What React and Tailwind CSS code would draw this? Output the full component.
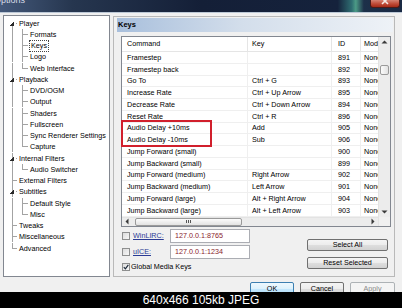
import React from "react";

const treeItems = [
  { label: "Player", level: 0, parent: true, first: true },
  { label: "Formats", level: 1 },
  { label: "Keys", level: 1, selected: true },
  { label: "Logo", level: 1 },
  { label: "Web Interface", level: 1, lastChild: true },
  { label: "Playback", level: 0, parent: true },
  { label: "DVD/OGM", level: 1 },
  { label: "Output", level: 1 },
  { label: "Shaders", level: 1 },
  { label: "Fullscreen", level: 1 },
  { label: "Sync Renderer Settings", level: 1 },
  { label: "Capture", level: 1, lastChild: true },
  { label: "Internal Filters", level: 0, parent: true },
  { label: "Audio Switcher", level: 1, lastChild: true },
  { label: "External Filters", level: 0 },
  { label: "Subtitles", level: 0, parent: true },
  { label: "Default Style", level: 1 },
  { label: "Misc", level: 1, lastChild: true },
  { label: "Tweaks", level: 0 },
  { label: "Miscellaneous", level: 0 },
  { label: "Advanced", level: 0, last: true },
];

const keyRows = [
  ["Framestep", "", "891"],
  ["Framestep back", "", "892"],
  ["Go To", "Ctrl + G", "893"],
  ["Increase Rate", "Ctrl + Up Arrow", "895"],
  ["Decrease Rate", "Ctrl + Down Arrow", "894"],
  ["Reset Rate", "Ctrl + R", "896"],
  ["Audio Delay +10ms", "Add", "905"],
  ["Audio Delay -10ms", "Sub", "906"],
  ["Jump Forward (small)", "", "900"],
  ["Jump Backward (small)", "", "899"],
  ["Jump Forward (medium)", "Right Arrow", "902"],
  ["Jump Backward (medium)", "Left Arrow", "901"],
  ["Jump Forward (large)", "Alt + Right Arrow", "904"],
  ["Jump Backward (large)", "Alt + Left Arrow", "903"],
];

const LINE = "#a3a3a3";

function TreeGuide({ item }) {
  const h = 11.25;
  const m = 5.5;
  if (item.level === 0) {
    return (
      <svg width="14" height={h} className="shrink-0" shapeRendering="crispEdges">
        {!item.first && <line x1="8.5" y1="0" x2="8.5" y2={m} stroke={LINE} />}
        {!item.last && <line x1="8.5" y1={m} x2="8.5" y2={h} stroke={LINE} />}
        {item.parent ? (
          <>
            <polygon points="10,3 10,7.5 5.5,7.5" fill="#2a2a2a" />
            <line x1="11.5" y1={m} x2="13" y2={m} stroke={LINE} />
          </>
        ) : (
          <line x1="8.5" y1={m} x2="13" y2={m} stroke={LINE} />
        )}
      </svg>
    );
  }
  return (
    <svg width="25" height={h} className="shrink-0" shapeRendering="crispEdges">
      <line x1="8.5" y1="0" x2="8.5" y2={h} stroke={LINE} />
      <line x1="18.5" y1="0" x2="18.5" y2={item.lastChild ? m : h} stroke={LINE} />
      <line x1="18.5" y1={m} x2="24" y2={m} stroke={LINE} />
    </svg>
  );
}

function Tree() {
  return (
    <div className="w-[107px] h-[262px] shrink-0 border border-[#828790] bg-white pt-[1.5px]">
      {treeItems.map((item) => (
        <div key={item.label} className="flex items-center h-[11.25px]">
          <TreeGuide item={item} />
          <span
            className={
              item.selected
                ? "px-[1px] py-[1.5px] border border-dotted border-[#444] whitespace-nowrap"
                : "ml-[1px] whitespace-nowrap"
            }
          >
            {item.label}
          </span>
        </div>
      ))}
    </div>
  );
}

function Arrow({ dir }) {
  const pts = {
    up: "0.5,3.5 3.5,0.5 6.5,3.5",
    down: "0.5,0.5 3.5,3.5 6.5,0.5",
    left: "3.5,0.5 0.5,3.5 3.5,6.5",
    right: "0.5,0.5 3.5,3.5 0.5,6.5",
  }[dir];
  const vert = dir === "up" || dir === "down";
  return (
    <svg width={vert ? 7 : 4} height={vert ? 4 : 7}>
      <polygon points={pts} fill="#3a3a3a" />
    </svg>
  );
}

function Checkbox({ checked }) {
  return (
    <div className="w-[8px] h-[8px] shrink-0 border border-[#8e8f8f] bg-[linear-gradient(135deg,#dcdcdc,#f7f7f7)] flex items-center justify-center">
      {checked && (
        <svg width="6" height="6" viewBox="0 0 6 6">
          <path d="M0.8 3.2 L2.4 4.8 L5.3 0.9" stroke="#1d2a3a" strokeWidth="1.2" fill="none" />
        </svg>
      )}
    </div>
  );
}

function Button({ children, className }) {
  return (
    <div
      className={
        "flex items-center justify-center rounded-[2px] border border-[#707070] bg-[linear-gradient(#f4f4f4,#ececec_50%,#dedede_50%,#d2d2d2)] " +
        className
      }
    >
      {children}
    </div>
  );
}

function KeysTable() {
  return (
    <div className="relative ml-[7px] mt-[4px] w-[270px] h-[191px] shrink-0 border border-[#828790] bg-white flex">
      <div className="w-[256px] flex flex-col overflow-hidden">
        <div className="h-[15px] shrink-0 flex border-b border-[#e5e5e5]">
          <div className="w-[126px] shrink-0 pl-[5px] flex items-center border-r border-[#e5e5e5]">Command</div>
          <div className="w-[84px] shrink-0 pl-[4px] flex items-center border-r border-[#e5e5e5]">Key</div>
          <div className="w-[29px] shrink-0 pl-[6px] flex items-center border-r border-[#e5e5e5]">ID</div>
          <div className="w-[17px] shrink-0 pl-[3px] flex items-center whitespace-nowrap overflow-hidden">Modifier</div>
        </div>
        {keyRows.map(([cmd, key, id]) => (
          <div key={cmd} className="h-[11.75px] shrink-0 flex border-b border-[#efefef]">
            <div className="w-[126px] shrink-0 pl-[5px] flex items-center border-r border-[#efefef] whitespace-nowrap">{cmd}</div>
            <div className="w-[84px] shrink-0 pl-[4px] flex items-center border-r border-[#efefef] whitespace-nowrap">{key}</div>
            <div className="w-[29px] shrink-0 pl-[6px] flex items-center border-r border-[#efefef]">{id}</div>
            <div className="w-[17px] shrink-0 pl-[3px] flex items-center whitespace-nowrap overflow-hidden">None</div>
          </div>
        ))}
        <div className="flex-1 flex bg-[#ececec] border-t border-[#e3e3e3]">
          <div className="w-[10px] flex items-center justify-center">
            <Arrow dir="left" />
          </div>
          <div className="w-[3px]" />
          <div className="w-[107px] rounded-[2px] border border-[#9a9a9a] bg-[linear-gradient(#fbfbfb,#e2e2e2)] flex items-center justify-center gap-[1px]">
            <div className="w-[1px] h-[3px] bg-[#555]" />
            <div className="w-[1px] h-[3px] bg-[#555]" />
            <div className="w-[1px] h-[3px] bg-[#555]" />
          </div>
          <div className="flex-1" />
          <div className="w-[10px] flex items-center justify-center">
            <Arrow dir="right" />
          </div>
        </div>
      </div>
      <div className="w-[12px] flex flex-col bg-[#ececec] border-l border-[#e3e3e3]">
        <div className="h-[10px] flex items-center justify-center">
          <Arrow dir="up" />
        </div>
        <div className="h-[18px]" />
        <div className="h-[10px] mx-[1px] rounded-[2px] border border-[#9a9a9a] bg-[linear-gradient(to_right,#fbfbfb,#e2e2e2)]" />
        <div className="flex-1" />
        <div className="h-[10px] flex items-center justify-center">
          <Arrow dir="down" />
        </div>
        <div className="h-[9px] bg-[#f0f0f0]" />
      </div>
      <div className="absolute left-[-1px] top-[83px] w-[91px] h-[27px] border-2 border-[#d11f2c]" />
    </div>
  );
}

function KeysPage() {
  return (
    <div className="w-[282px] h-[261px] mt-[1px] shrink-0 border border-[#b9b9b9] flex flex-col">
      <div className="ml-[3px] mt-[1px] w-[276px] h-[14px] shrink-0 pl-[1px] flex items-center font-bold text-[7.5px] bg-[linear-gradient(to_right,#a8bfdc,#d3deeb_45%,#eef2f7)]">
        Keys
      </div>
      <KeysTable />
      <div className="flex justify-between pl-[8px] pr-[6px]">
        <div className="flex flex-col pt-[2px]">
          <div className="h-[14px] flex items-center">
            <div className="w-[48px] flex items-center gap-[3px]">
              <Checkbox />
              <span className="text-[#2a3a94] underline">WinLIRC:</span>
            </div>
            <div className="w-[80px] h-[14px] border border-[#abadb3] bg-white pl-[4px] flex items-center text-[#8a1e2c]">
              127.0.0.1:8765
            </div>
          </div>
          <div className="h-[14px] mt-[2px] flex items-center">
            <div className="w-[48px] flex items-center gap-[3px]">
              <Checkbox />
              <span className="text-[#2a3a94] underline">uICE:</span>
            </div>
            <div className="w-[80px] h-[14px] border border-[#abadb3] bg-white pl-[4px] flex items-center text-[#8a1e2c]">
              127.0.0.1:1234
            </div>
          </div>
          <div className="h-[9px] mt-[3px] flex items-center gap-[1px]">
            <Checkbox checked />
            <span>Global Media Keys</span>
          </div>
        </div>
        <div className="flex flex-col pt-[12px] gap-[6px]">
          <Button className="w-[81px] h-[12px]">Select All</Button>
          <Button className="w-[81px] h-[12px]">Reset Selected</Button>
        </div>
      </div>
    </div>
  );
}

export default function App() {
  return (
    <div className="w-[402px] h-[308px] overflow-hidden flex flex-col font-['Liberation_Sans',Arial,sans-serif] text-[7.2px] leading-none text-black">
      <div className="h-[292px] shrink-0 overflow-hidden flex flex-col bg-[#f0f0f0]">
        <div className="h-[12px] shrink-0 flex bg-[linear-gradient(to_right,#44597a,#26364f_18%,#141f37_50%,#15223c_84%,#2f6e72_87.5%,#4c9b86_88.5%,#1d3049_90.5%,#1a2a44)]">
          <span className="ml-[-6px] mt-[-4px] text-[9px] text-[#d5dbe5] whitespace-nowrap">Options</span>
          <div className="flex-1" />
          <div className="w-[30px] h-[8px] mr-[2px] rounded-b-[3px] border border-t-0 border-[#4a1a18] bg-[linear-gradient(#d58272,#bf4a36_55%,#a42a18)] flex justify-center">
            <svg width="8" height="6">
              <path d="M1 -2 L7 4 M7 -2 L1 4" stroke="#f4e8e4" strokeWidth="1.6" />
            </svg>
          </div>
        </div>
        <div className="h-[1px] shrink-0 bg-[#bcc8d6]" />
        <div className="h-[2px] shrink-0" />
        <div className="flex pl-[3px] gap-[3px]">
          <Tree />
          <KeysPage />
        </div>
        <div className="flex justify-end gap-[6px] pr-[7px] pt-[5px]">
          <div className="w-[44px] h-[14px] flex items-center justify-center rounded-[2px] border border-[#3c7fb1] bg-[linear-gradient(#eef8fe,#dcf1fc_50%,#c3e7fc_50%,#b2def9)]">
            OK
          </div>
          <Button className="w-[44px] h-[14px]">Cancel</Button>
          <div className="w-[45px] h-[14px] flex items-center justify-center rounded-[2px] border border-[#adb2b5] bg-[#f4f4f4] text-[#8a8a8a]">
            Apply
          </div>
        </div>
      </div>
      <div className="flex-1 bg-black text-white text-[12px] flex items-center justify-center">
        640x466 105kb JPEG
      </div>
    </div>
  );
}
